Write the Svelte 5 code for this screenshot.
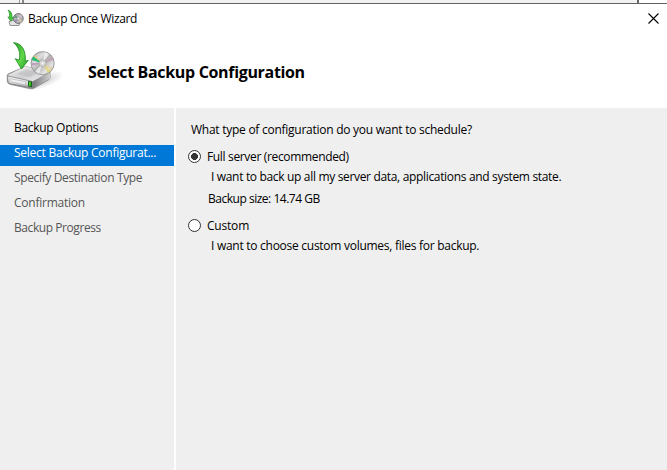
<script>
  const steps = [
    { label: 'Backup Options', state: 'done', spacing: -0.31 },
    { label: 'Select Backup Configurat...', state: 'current', spacing: -0.25 },
    { label: 'Specify Destination Type', state: 'pending', spacing: -0.36 },
    { label: 'Confirmation', state: 'pending', spacing: -0.24 },
    { label: 'Backup Progress', state: 'pending', spacing: -0.43 }
  ];
  let choice = $state('full');
</script>

{#snippet smallIcon()}
  <svg width="18" height="18" viewBox="0 0 18 18" aria-hidden="true">
    <path d="m2 12.500 4-1.500 7 2-1 3.500H3Z" fill="#e4e4e5" stroke="#88888a" stroke-width=".9" />
    <circle cx="11.300" cy="9.500" r="4.900" fill="#b9b5b9" stroke="#6f6c70" stroke-width="1" />
    <path d="m11.300 9.500-4.500-.8 2-3Z" fill="#6d9c84" />
    <path d="m11.300 9.500 2-4 2 1.500Z" fill="#d9c3cf" />
    <path d="m11.300 9.500 3.500 2.700-1.700 1.300Z" fill="#dcd0a0" />
    <path d="m11.300 9.500-4 2.200 1.600 1.800Z" fill="#9889a8" />
    <circle cx="11.300" cy="9.500" r="1.300" fill="#f3f3f3" stroke="#88858a" stroke-width=".5" />
    <path d="M1 1C4 2 5.300 5 4.800 8.500l1.500-.3L4 12.300.9 8l1.500.5C3.100 5.500 2.500 3 1 1Z" fill="#4ccb3c" stroke="#219327" stroke-width=".8" stroke-linejoin="round" />
  </svg>
{/snippet}

{#snippet largeIcon()}
  <svg width="56" height="56" viewBox="0 0 56 56" aria-hidden="true">
    <defs>
      <linearGradient id="drive-top" x1="0" y1="0" x2="1" y2="1">
        <stop offset="0" stop-color="#fafafa" /><stop offset=".5" stop-color="#cfcfd1" /><stop offset="1" stop-color="#f5f5f6" />
      </linearGradient>
      <linearGradient id="drive-front" x1="0" y1="0" x2="0" y2="1">
        <stop offset="0" stop-color="#fff" /><stop offset=".6" stop-color="#d6d6d8" /><stop offset="1" stop-color="#949497" />
      </linearGradient>
      <linearGradient id="drive-side" x1="0" y1="0" x2="1" y2="0">
        <stop offset="0" stop-color="#77777a" /><stop offset="1" stop-color="#cececf" />
      </linearGradient>
      <linearGradient id="disc" x1="0" y1="0" x2="1" y2="1">
        <stop offset="0" stop-color="#9a9a9a" /><stop offset=".3" stop-color="#dedede" /><stop offset=".5" stop-color="#b0b0b0" /><stop offset=".75" stop-color="#e6e6e6" /><stop offset="1" stop-color="#939393" />
      </linearGradient>
      <linearGradient id="arrow" x1="0" y1="0" x2="1" y2="1">
        <stop offset="0" stop-color="#279b27" /><stop offset=".55" stop-color="#62d84a" /><stop offset="1" stop-color="#259d25" />
      </linearGradient>
      <radialGradient id="shadow">
        <stop offset="0" stop-color="#777" stop-opacity=".35" /><stop offset="1" stop-color="#777" stop-opacity="0" />
      </radialGradient>
    </defs>
    <ellipse cx="37" cy="43" rx="23" ry="7" fill="url(#shadow)" transform="rotate(-20 37 43)" />
    <path d="M2 36 17 29.500q2-1 4-.6L42 32.500q2 .5 2 2.300v5q0 1-1 1.700L28.500 50q-2 1-4 .7L4 46.300q-2.500-.5-2.700-3v-6Z" fill="#adadaf" stroke="#838385" stroke-width=".8" />
    <path d="M2.500 36.800 17 29.400q2-1 4-.6L42 32.800q2 .6 .5 1.700L28 42.700q-1.500 1-4 .6L4 38.800q-2.500-.8-1.500-2Z" fill="url(#drive-top)" />
    <path d="m10 36 10-4.500L33 34 24 39.100Z" fill="#b1b1b3" opacity=".4" />
    <path d="m1.800 38 23 5q1.500.3 1.700 2v5.200l-22-4.400q-2.700-.7-2.700-4Z" fill="url(#drive-front)" stroke="#767679" stroke-width=".7" />
    <path d="m26.500 43.500 16.500-8.900q1 1 1 2v3.900L28 49.800q-.8.500-1.500.4Z" fill="url(#drive-side)" />
    <path d="m3.500 40.500 16 3.200v3.100L5.500 44q-2-.8-2-3.500Z" fill="#eeeeef" stroke="#a5a5a7" stroke-width=".5" />
    <path d="m22 43 4 .6v5.600l-4-.6Z" fill="#176018" />
    <path d="m22.900 44 1.900.3v3.800l-1.900-.3Z" fill="#45d72f" />
    <circle cx="36.600" cy="25.200" r="11.600" fill="url(#disc)" stroke="#888" stroke-width=".8" />
    <path d="m36.600 25.200-11-3.300q.8-2 1.900-3.400Z" fill="#25bd72" />
    <path d="m36.600 25.200-9.100-6.700q.6-.8 1.300-1.500Z" fill="#e4c66a" opacity=".75" />
    <path d="m36.600 25.200 8.600 7.200q-1.400 1.500-3.400 2.500Z" fill="#e5d76c" opacity=".75" />
    <path d="m36.600 25.200 10.500 4q-.5 1.500-1.500 2.600Z" fill="#e3c9a5" opacity=".65" />
    <path d="m36.600 25.200 9.700-5.700q.7 1 1.100 2.200Z" fill="#c78dad" opacity=".75" />
    <path d="m36.600 25.200-10.800 2.300-.1-2.500Z" fill="#b383b7" opacity=".7" />
    <path d="m36.600 25.200 2-11q2.500.6 4.500 2Zm0 0-3.600 10.500q-2-.7-3.800-2.200Z" fill="#fff" opacity=".65" />
    <circle cx="36.600" cy="25.200" r="3.400" fill="#dedede" stroke="#949494" stroke-width=".6" />
    <circle cx="36.600" cy="25.200" r="1.500" fill="#fff" stroke="#aaa" stroke-width=".5" />
    <path d="M7.500 4.700C15.500 5 20 12 19.300 23.200l2.900-.9L15.500 31 9.300 20.700l3.900 1.500C15 15 12.500 8.500 7.500 4.700Z" fill="url(#arrow)" stroke="#239226" stroke-width=".9" stroke-linejoin="round" />
  </svg>
{/snippet}

<div class="window">
  <div class="backdrop"><i></i><b></b></div>
  <header class="titlebar">
    <span class="small-icon">{@render smallIcon()}</span>
    <span class="title">Backup Once Wizard</span>
    <button class="close" aria-label="Close">
      <svg width="11" height="11" viewBox="0 0 11 11"><path d="m.5.5 10 10m0-10-10 10" fill="none" stroke="#000" stroke-width="1.100" /></svg>
    </button>
  </header>
  <div class="heading">
    <span class="large-icon">{@render largeIcon()}</span>
    <h1>Select Backup Configuration</h1>
  </div>
  <div class="content">
    <nav>
      {#each steps as step}
        <div class="step {step.state}"><span style="letter-spacing: {step.spacing}px">{step.label}</span></div>
      {/each}
    </nav>
    <main>
      <p class="question">What type of configuration do you want to schedule?</p>
      <label class="first"><input type="radio" value="full" bind:group={choice} /><span class="full">Full server (recommended)</span></label>
      <p class="detail all">I want to back up all my server data, applications and system state.</p>
      <p class="size">Backup size: 14.74 GB</p>
      <label class="second"><input type="radio" value="custom" bind:group={choice} /><span class="custom">Custom</span></label>
      <p class="detail volumes">I want to choose custom volumes, files for backup.</p>
    </main>
  </div>
</div>

<style>
  :global(body) { overflow: hidden; background: #fff; }
  .window { width: 667px; height: 470px; display: flex; flex-direction: column; background: #fff; color: #000; font: 12px/18px "Open Sans", "Noto Sans", sans-serif; }
  .backdrop { height: 3px; flex: none; display: flex; justify-content: space-between; background: #f1f1f1; border-bottom: 1px solid #626262; }
  .backdrop i { width: 2px; margin-left: 19px; border-left: 1px solid #999; border-right: 2px solid #888; }
  .backdrop b { width: 28px; background: #fff; border-left: 2px solid #666; }
  .titlebar { height: 34px; flex: none; display: flex; align-items: flex-start; }
  .small-icon { width: 18px; height: 18px; margin: 5px 3px 0 7px; }
  .title { margin-top: 6px; letter-spacing: -.34px; white-space: nowrap; }
  .close { margin: 9px 8px 0 auto; padding: 0; border: 0; background: none; width: 11px; height: 11px; display: flex; }
  svg { display: block; }
  .heading { height: 70px; flex: none; display: flex; }
  .large-icon { margin-left: 6px; width: 56px; height: 56px; }
  h1 { margin: 22px 0 0 26px; font-size: 16px; line-height: 24px; letter-spacing: -.33px; white-space: nowrap; }
  .content { flex: 1; display: flex; }
  nav { width: 174px; box-sizing: border-box; padding-top: 8px; background: #efefef; }
  .step { box-sizing: border-box; height: 21px; margin-bottom: 4px; padding-left: 14px; line-height: 16px; color: #565656; white-space: nowrap; }
  .step:first-child { padding-top: 4px; height: 25px; }
  .step.done { color: #000; }
  .step.current { color: #fff; background: #0078d7; }
  main { flex: 1; margin-left: 2px; background: #efefef; display: flex; flex-direction: column; align-items: flex-start; }
  p { margin: 0; white-space: nowrap; }
  .question { margin: 13px 0 0 15px; letter-spacing: -.26px; }
  label { display: flex; align-items: flex-start; height: 18px; margin-left: 12px; gap: 6px; white-space: nowrap; }
  input { appearance: none; width: 13px; height: 13px; margin: 2px 0 0; box-sizing: border-box; border: 1px solid #333; border-radius: 50%; background: #fff; }
  input:checked { background: radial-gradient(circle, #333 0 3.200px, #fff 3.700px); }
  .first { margin-top: 9px; }
  .second { margin-top: 9px; }
  .full { letter-spacing: -.34px; }
  .custom { letter-spacing: -.2px; }
  .detail { margin: 2px 0 0 35px; }
  .all { letter-spacing: -.33px; }
  .volumes { letter-spacing: -.27px; }
  .size { margin: 4px 0 0 32px; letter-spacing: -.48px; }
</style>
